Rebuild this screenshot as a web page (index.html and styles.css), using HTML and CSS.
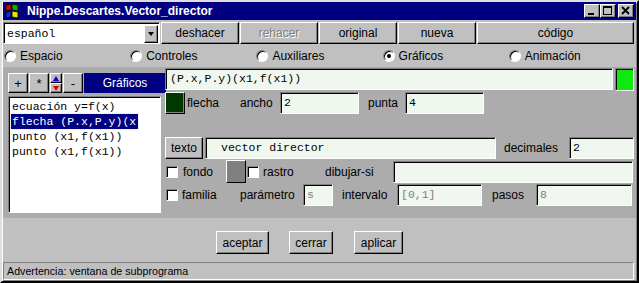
FILE: index.html
```html
<!DOCTYPE html>
<html lang="es">
<head>
    <meta charset="UTF-8">
    <title>Nippe.Descartes.Vector_director</title>
    <link rel="stylesheet" href="styles.css">
</head>
<body>
    <div class="window">
        <div class="titlebar">
            <svg class="app-icon" width="16" height="16" viewBox="0 0 16 16">
                <path d="M2 2 L7 1 L7 7 L2 8 Z" fill="#e00000" stroke="#000" stroke-width="0.8"/>
                <path d="M8 1 L14 2 L14 8 L8 7 Z" fill="#00b000" stroke="#000" stroke-width="0.8"/>
                <path d="M2 9 L7 8 L7 14 L2 15 Z" fill="#0030e0" stroke="#000" stroke-width="0.8"/>
                <path d="M8 8 L14 9 L14 15 L8 14 Z" fill="#f0e000" stroke="#000" stroke-width="0.8"/>
            </svg>
            <span class="title">Nippe.Descartes.Vector_director</span>
            <div class="win-buttons">
                <span class="win-btn">
                    <svg width="14" height="12" viewBox="0 0 14 12"><rect x="3" y="8" width="6" height="2" fill="#000"/></svg>
                </span>
                <span class="win-btn">
                    <svg width="14" height="12" viewBox="0 0 14 12"><rect x="2.5" y="1.5" width="8" height="8" fill="none" stroke="#000"/><rect x="2" y="1" width="9" height="2" fill="#000"/></svg>
                </span>
                <span class="win-btn close">
                    <svg width="14" height="12" viewBox="0 0 14 12"><path d="M3 2 L10 9 M10 2 L3 9" stroke="#000" stroke-width="1.8"/></svg>
                </span>
            </div>
        </div>

        <div class="toolbar">
            <div class="select">
                <span class="select-text">español</span>
                <span class="select-arrow"></span>
            </div>
            <button class="btn tool-btn">deshacer</button>
            <button class="btn tool-btn disabled">rehacer</button>
            <button class="btn tool-btn">original</button>
            <button class="btn tool-btn">nueva</button>
            <button class="btn tool-btn wide">código</button>
        </div>

        <div class="tabs">
            <label class="radio"><span class="radio-dot"></span>Espacio</label>
            <label class="radio"><span class="radio-dot"></span>Controles</label>
            <label class="radio"><span class="radio-dot"></span>Auxiliares</label>
            <label class="radio"><span class="radio-dot checked"></span>Gráficos</label>
            <label class="radio"><span class="radio-dot"></span>Animación</label>
        </div>

        <div class="panel">
            <div class="side">
                <div class="side-tools">
                    <button class="btn sq">+</button>
                    <button class="btn sq">*</button>
                    <div class="updown">
                        <span class="btn half"><span class="tri up"></span></span>
                        <span class="btn half"><span class="tri down"></span></span>
                    </div>
                    <button class="btn sq">-</button>
                    <div class="side-title">Gráficos</div>
                </div>
                <div class="list">
                    <div class="item">ecuación y=f(x)</div>
                    <div class="item"><span class="selected">flecha (P.x,P.y)(x</span></div>
                    <div class="item">punto (x1,f(x1))</div>
                    <div class="item">punto (x1,f(x1))</div>
                </div>
            </div>

            <div class="editor">
                <div class="row row-a">
                    <span class="field expr">(P.x,P.y)(x1,f(x1))</span>
                    <span class="swatch bright"></span>
                </div>
                <div class="row row-b">
                    <span class="swatch dark"></span>
                    <span class="lbl l-flecha">flecha</span>
                    <span class="lbl l-ancho">ancho</span>
                    <span class="field f-ancho">2</span>
                    <span class="lbl l-punta">punta</span>
                    <span class="field f-punta">4</span>
                </div>
                <div class="row row-c">
                    <button class="btn texto">texto</button>
                    <span class="field f-texto">vector director</span>
                    <span class="lbl l-decimales">decimales</span>
                    <span class="field f-decimales">2</span>
                </div>
                <div class="row row-d">
                    <span class="check c-fondo"></span>
                    <span class="lbl l-fondo">fondo</span>
                    <span class="swatch gray"></span>
                    <span class="check c-rastro"></span>
                    <span class="lbl l-rastro">rastro</span>
                    <span class="lbl l-dibujar">dibujar-si</span>
                    <span class="field f-dibujar"></span>
                </div>
                <div class="row row-e">
                    <span class="check c-familia"></span>
                    <span class="lbl l-familia">familia</span>
                    <span class="lbl l-parametro">parámetro</span>
                    <span class="field off f-parametro">s</span>
                    <span class="lbl l-intervalo">intervalo</span>
                    <span class="field off f-intervalo">[0,1]</span>
                    <span class="lbl l-pasos">pasos</span>
                    <span class="field off f-pasos">8</span>
                </div>
            </div>
        </div>

        <div class="actions">
            <button class="btn act aceptar">aceptar</button>
            <button class="btn act cerrar">cerrar</button>
            <button class="btn act aplicar">aplicar</button>
        </div>

        <div class="status">Advertencia: ventana de subprograma</div>
    </div>
</body>
</html>
```

FILE: styles.css
```css
:root {
    --face: #c0c0c0;
    --panel: #acacac;
    --shadow: #808080;
    --navy: #000080;
    --field: #f0f7ef;
}

* {
    margin: 0;
    padding: 0;
    box-sizing: border-box;
}

body {
    font-family: "Liberation Sans", Arial, sans-serif;
    font-size: 12px;
    color: #000;
    background: var(--face);
}

.window {
    width: 639px;
    height: 283px;
    background: var(--face);
    border: 2px solid;
    border-color: #dfdfdf #000 #000 #dfdfdf;
    box-shadow: inset 1px 1px #fff, inset -1px -1px var(--shadow);
    padding: 0 1px 1px 1px;
    display: flex;
    flex-direction: column;
}

/* barra de titulo */
.titlebar {
    height: 18px;
    background: var(--navy);
    display: flex;
    align-items: center;
    padding: 0 2px 0 1px;
}

.app-icon {
    margin-right: 7px;
}

.title {
    color: #fff;
    font-weight: bold;
    font-size: 12px;
}

.win-buttons {
    margin-left: auto;
    display: flex;
}

.win-btn {
    width: 16px;
    height: 14px;
    background: var(--face);
    border: 1px solid;
    border-color: #fff #000 #000 #fff;
    box-shadow: inset -1px -1px var(--shadow);
    display: flex;
}

.win-btn.close {
    margin-left: 2px;
}

/* botones genericos */
.btn {
    font-family: inherit;
    font-size: 12px;
    background: var(--face);
    border: 1px solid;
    border-color: #fff #000 #000 #fff;
    box-shadow: inset -1px -1px var(--shadow);
    color: #000;
    display: flex;
    align-items: center;
    justify-content: center;
}

.btn.disabled {
    color: var(--shadow);
    text-shadow: 1px 1px #fff;
}

.toolbar {
    margin-top: 2px;
    height: 22px;
    display: flex;
    gap: 1px;
    padding-right: 2px;
}

.select {
    width: 157px;
    background: #fff;
    border: 1px solid;
    border-color: var(--shadow) #fff #fff var(--shadow);
    box-shadow: inset 1px 1px #000;
    display: flex;
    align-items: center;
    padding: 1px 1px 0 3px;
}

.select-text {
    font-family: "Liberation Mono", "Courier New", monospace;
    font-size: 11.5px;
    flex: 1;
}

.select-arrow {
    width: 14px;
    height: 18px;
    background: var(--face);
    border: 1px solid;
    border-color: #fff #000 #000 #fff;
    box-shadow: inset -1px -1px var(--shadow);
    position: relative;
}

.select-arrow::after {
    content: "";
    position: absolute;
    left: 3px;
    top: 6px;
    border-left: 3.5px solid transparent;
    border-right: 3.5px solid transparent;
    border-top: 4px solid #000;
}

.tool-btn {
    width: 78px;
}

.tool-btn.wide {
    flex: 1;
}

/* pestañas */
.tabs {
    height: 23px;
    display: flex;
    align-items: center;
    padding-left: 1px;
}

.radio {
    width: 126.2px;
    display: flex;
    align-items: center;
    gap: 4px;
}

.radio-dot {
    width: 12px;
    height: 12px;
    border-radius: 50%;
    background: #fff;
    border: 1px solid;
    border-color: var(--shadow) #fff #fff var(--shadow);
    box-shadow: inset 1px 1px #000;
    position: relative;
}

.radio-dot.checked::after {
    content: "";
    position: absolute;
    left: 3px;
    top: 3px;
    width: 4px;
    height: 4px;
    border-radius: 50%;
    background: #000;
}

/* panel principal */
.panel {
    height: 151px;
    background: var(--panel);
    display: flex;
}

.side {
    width: 162px;
    padding: 6px 0 0 5px;
}

.side-tools {
    display: flex;
    height: 20px;
    gap: 1px;
}

.btn.sq {
    width: 20px;
    font-size: 13px;
}

.updown {
    width: 12px;
    display: flex;
    flex-direction: column;
}

.btn.half {
    height: 10px;
}

.tri {
    width: 0;
    height: 0;
    border-left: 3px solid transparent;
    border-right: 3px solid transparent;
}

.tri.up {
    border-bottom: 5px solid #0000e0;
}

.tri.down {
    border-top: 5px solid #e00000;
}

.side-title {
    flex: 1;
    background: var(--navy);
    color: #fff;
    display: flex;
    align-items: center;
    justify-content: center;
    margin-right: -1px;
}

.list {
    margin-top: 3px;
    width: 153px;
    height: 117px;
    background: #fff;
    border: 1px solid;
    border-color: var(--shadow) #fff #fff var(--shadow);
    box-shadow: inset 1px 1px #000;
    padding: 2px 0 0 2px;
    font-family: "Liberation Mono", "Courier New", monospace;
    font-size: 11.5px;
    overflow: hidden;
}

.item {
    height: 15px;
    line-height: 15px;
    white-space: nowrap;
    padding-left: 1px;
}

.selected {
    display: inline-block;
    background: var(--navy);
    color: #fff;
    outline: 1px dotted #ffff00;
    margin-left: -1px;
    padding: 0 2px 0 1px;
}

.editor {
    flex: 1;
    padding-right: 2px;
}

.row {
    display: flex;
    align-items: center;
    height: 22px;
}

.row-a { margin-top: 1px; }
.row-b { margin-top: 2px; }
.row-c { margin-top: 23px; }
.row-d { margin-top: 1px; height: 23px; }
.row-e { margin-top: 1px; }

.field {
    height: 22px;
    line-height: 20px;
    background: var(--field);
    border: 1px solid;
    border-color: var(--shadow) #fff #fff var(--shadow);
    box-shadow: inset 1px 1px #000;
    padding-left: 3px;
    font-family: "Liberation Mono", "Courier New", monospace;
    font-size: 11.5px;
    white-space: nowrap;
    overflow: hidden;
}

.field.off {
    color: var(--shadow);
}

.swatch {
    border: 1px solid;
    border-color: #fff #000 #000 #fff;
    box-shadow: inset -1px -1px var(--shadow);
}

.swatch.bright {
    width: 19px;
    height: 23px;
    margin-left: 2px;
    background: #11e811;
    border-color: var(--shadow) #fff #fff var(--shadow);
    box-shadow: inset 1px 1px #000;
}

.swatch.dark {
    width: 20px;
    height: 22px;
    background: #003800;
}

.swatch.gray {
    width: 20px;
    height: 23px;
    background: var(--shadow);
}

.lbl {
    white-space: nowrap;
}

.check {
    width: 12px;
    height: 12px;
    background: #fff;
    border: 1px solid;
    border-color: var(--shadow) #fff #fff var(--shadow);
    box-shadow: inset 1px 1px #000;
    margin-left: 1px;
}

.expr { width: 448px; padding-left: 4px; }

.l-flecha { width: 53px; margin-left: 2px; }
.l-ancho { width: 40px; }
.f-ancho { width: 79px; }
.l-punta { width: 37px; margin-left: 9px; }
.f-punta { width: 79px; }

.btn.texto { width: 38px; height: 22px; }
.f-texto { width: 291px; margin-left: 2px; padding-left: 15px; }
.l-decimales { width: 65px; margin-left: 8px; }
.f-decimales { width: 65px; }

.l-fondo { width: 43px; margin-left: 5px; }
.l-rastro { width: 62px; margin-left: 4px; }
.l-dibujar { width: 68px; }
.f-dibujar { width: 240px; }

.l-familia { width: 58px; margin-left: 4px; }
.l-parametro { width: 63px; }
.f-parametro { width: 30px; }
.l-intervalo { width: 55px; margin-left: 9px; }
.f-intervalo { width: 85px; }
.l-pasos { width: 44px; margin-left: 10px; }
.f-pasos { width: 96px; }

/* botones inferiores */
.actions {
    height: 44px;
    display: flex;
    align-items: flex-start;
    padding: 13px 0 0 213px;
    gap: 20px;
}

.btn.act {
    height: 23px;
}

.aceptar { width: 53px; }
.cerrar { width: 44px; }
.aplicar { width: 49px; margin-left: 1px; }

.status {
    height: 18px;
    border: 1px solid;
    border-color: var(--shadow) #fff #fff var(--shadow);
    margin-right: 2px;
    padding-left: 3px;
    line-height: 16px;
    font-size: 10.7px;
}
```
